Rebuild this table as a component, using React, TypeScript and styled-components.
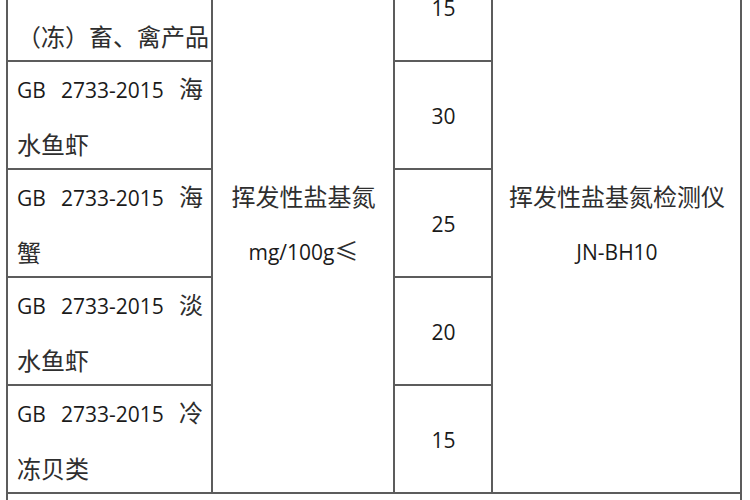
import { Fragment } from 'react';
import styled, { createGlobalStyle } from 'styled-components';

const Global = createGlobalStyle`
  html, body { margin: 0; padding: 0; background: #fff; overflow: hidden; }
  body { width: 750px; height: 500px; }
`;

const Sheet = styled.div`
  display: grid;
  grid-template-columns: 203px 180px 96px 247px;
  grid-template-rows: repeat(5, 106px) 30px;
  gap: 2px;
  padding: 2px;
  width: fit-content;
  margin: -48px 0 0 6px;
  background: #5c5c5c;
  font-family: "Noto Sans CJK SC", "Noto Sans", sans-serif;
  font-size: 24px;
  color: #2e2e2e;
`;

const Cell = styled.div<{ $center?: boolean; $col: number; $span?: number }>`
  background: #fff;
  grid-column: ${p => p.$col};
  grid-row: ${p => (p.$span ? `1 / span ${p.$span}` : 'auto')};
  display: flex;
  flex-direction: column;
  justify-content: center;
  align-items: ${p => (p.$center ? 'center' : 'stretch')};
  padding: 2px 8px 0 9px;
  line-height: 54px;
  white-space: nowrap;
`;

const Footer = styled.div`
  background: #fff;
  grid-column: 1 / -1;
`;

const Line = styled.div<{ $justify?: boolean }>`
  text-align: ${p => (p.$justify ? 'justify' : 'left')};
  text-align-last: ${p => (p.$justify ? 'justify' : 'auto')};
  white-space: ${p => (p.$justify ? 'normal' : 'nowrap')};
`;

const Latin = styled.span`
  font-family: "Open Sans", "Liberation Sans", sans-serif;
  font-size: 21px;
  color: #1a1a1a;
`;

const rows = [
  { std: 'GB', code: '2707-2016', head: '鲜', tail: '（冻）畜、禽产品', limit: '15' },
  { std: 'GB', code: '2733-2015', head: '海', tail: '水鱼虾', limit: '30' },
  { std: 'GB', code: '2733-2015', head: '海', tail: '蟹', limit: '25' },
  { std: 'GB', code: '2733-2015', head: '淡', tail: '水鱼虾', limit: '20' },
  { std: 'GB', code: '2733-2015', head: '冷', tail: '冻贝类', limit: '15' },
];

export default function App() {
  return (
    <>
      <Global />
      <Sheet>
        {rows.map((r, i) => (
          <Fragment key={i}>
            <Cell $col={1}>
              <Line $justify>
                <Latin>{r.std}</Latin> <Latin>{r.code}</Latin> {r.head}
              </Line>
              <Line>{r.tail}</Line>
            </Cell>
            {i === 0 && (
              <Cell $col={2} $span={5} $center>
                <div>挥发性盐基氮</div>
                <div><Latin>mg/100g</Latin>≤</div>
              </Cell>
            )}
            <Cell $col={3} $center>
              <Latin>{r.limit}</Latin>
            </Cell>
            {i === 0 && (
              <Cell $col={4} $span={5} $center>
                <div>挥发性盐基氮检测仪</div>
                <div><Latin>JN-BH10</Latin></div>
              </Cell>
            )}
          </Fragment>
        ))}
        <Footer />
      </Sheet>
    </>
  );
}
